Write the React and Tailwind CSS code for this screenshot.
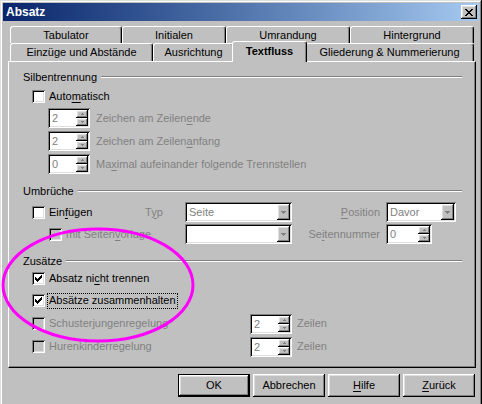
import React from "react";

// classic win2k bevels
const sunken =
  "shadow-[inset_1px_1px_0_#808080,inset_-1px_-1px_0_#fff,inset_2px_2px_0_#000,inset_-2px_-2px_0_#dfdfdf]";
const raised =
  "shadow-[inset_-1px_-1px_0_#000,inset_1px_1px_0_#fff,inset_-2px_-2px_0_#808080,inset_2px_2px_0_#dfdfdf]";

const CHECK = ["......x", ".....xx", "x...xxx", "xx.xxx.", "xxxxx..", ".xxx...", "..x...."];

const CheckMark = () => (
  <svg width="7" height="7" viewBox="0 0 7 7" shapeRendering="crispEdges">
    {CHECK.map((row, y) =>
      row.split("").map((c, x) =>
        c === "x" ? <rect key={`${x}-${y}`} x={x} y={y} width="1" height="1" fill="#000" /> : null
      )
    )}
  </svg>
);

const U = ({ children }) => <span className="underline underline-offset-[2px]">{children}</span>;

const Check = ({ checked, disabled, children, focus }) => (
  <div className="flex items-center">
    <div
      className={`flex h-[13px] w-[13px] shrink-0 items-center justify-center ${sunken} ${
        disabled ? "bg-[#c0c0c0]" : "bg-white"
      }`}
    >
      {checked && <CheckMark />}
    </div>
    <span
      className={`whitespace-nowrap leading-[13px] ${disabled ? "text-[#808080]" : "text-black"} ${
        focus ? "ml-[3px] px-[1px] pb-[1px] outline-1 outline-dotted outline-black" : "ml-[4px]"
      }`}
    >
      {children}
    </span>
  </div>
);

const Tri = ({ up, w = 5 }) => (
  <svg width={w} height={Math.ceil(w / 2)} viewBox={`0 0 ${w} ${Math.ceil(w / 2)}`} shapeRendering="crispEdges">
    <path
      d={up ? `M${w / 2} 0 L${w} ${Math.ceil(w / 2)} L0 ${Math.ceil(w / 2)} Z` : `M0 0 L${w} 0 L${w / 2} ${Math.ceil(w / 2)} Z`}
      fill="#808080"
    />
  </svg>
);

const Spin = ({ value, className }) => (
  <div className={`flex h-[20px] shrink-0 bg-white p-[2px] ${sunken} ${className}`}>
    <span className="flex-1 pl-[2px] leading-[16px] text-[#808080]">{value}</span>
    <div className="flex w-[12px] flex-col">
      <div className={`flex h-[8px] items-center justify-center bg-[#c0c0c0] ${raised}`}>
        <Tri up w={3} />
      </div>
      <div className={`flex h-[8px] items-center justify-center bg-[#c0c0c0] ${raised}`}>
        <Tri w={3} />
      </div>
    </div>
  </div>
);

const Drop = ({ value, className }) => (
  <div className={`flex h-[20px] shrink-0 bg-white p-[2px] ${sunken} ${className}`}>
    <span className="flex-1 pl-[2px] leading-[16px] text-[#808080]">{value}</span>
    <div className={`flex h-[16px] w-[13px] items-center justify-center bg-[#c0c0c0] ${raised}`}>
      <Tri w={5} />
    </div>
  </div>
);

const Header = ({ children, className }) => (
  <div className={`flex h-[14px] items-center pl-[14px] pr-[13px] ${className}`}>
    <span className="leading-[14px]">{children}</span>
    <div className="ml-[4px] h-[2px] flex-1 border-t border-b border-t-[#808080] border-b-white" />
  </div>
);

const Tab = ({ children, w, selected }) => (
  <div
    className={`flex items-center justify-center rounded-t-[3px] border-t border-l border-r border-t-white border-l-white border-r-black bg-[#c0c0c0] shadow-[inset_-1px_0_0_#808080] ${w} ${
      selected ? "relative top-[1px] z-10 -mx-[2px] h-[21px] pb-[2px] font-bold" : "h-full"
    }`}
  >
    <span className="whitespace-nowrap leading-none">{children}</span>
  </div>
);

const Btn = ({ children, def }) => (
  <div className={`h-[23px] w-[72px] ${def ? "border border-black" : ""}`}>
    <div className={`flex h-full w-full items-center justify-center bg-[#c0c0c0] ${raised}`}>
      <span className="leading-none">{children}</span>
    </div>
  </div>
);

export default function App() {
  return (
    <div className="relative h-[404px] w-[482px] overflow-hidden bg-[#c0c0c0] font-['Liberation_Sans',Arial,sans-serif] text-[11px] text-black">
      <div className="h-[410px] p-[3px] shadow-[inset_-1px_-1px_0_#000,inset_1px_1px_0_#dfdfdf,inset_-2px_-2px_0_#808080,inset_2px_2px_0_#fff]">
        {/* title bar */}
        <div className="flex h-[18px] items-center bg-gradient-to-r from-[#0a246a] to-[#a6caf0] pl-[3px] pr-[2px]">
          <span className="flex-1 text-[12px] font-bold leading-none text-white">Absatz</span>
          <div className={`flex h-[14px] w-[16px] items-center justify-center bg-[#c0c0c0] ${raised}`}>
            <svg width="8" height="7" viewBox="0 0 8 7" shapeRendering="crispEdges">
              <path d="M0 0h2v1h1v1h2v-1h1v-1h2v1h-1v1h-1v1h-1v1h1v1h1v1h1v1h-2v-1h-1v-1h-2v1h-1v1h-2v-1h1v-1h1v-1h1v-1h-1v-1h-1z" fill="#000" />
            </svg>
          </div>
        </div>

        <div className="ml-[5px] mt-[5px] w-[468px]">
          {/* tabs */}
          <div className="flex h-[17px] pl-[2px]">
            <Tab w="w-[112px]">Tabulator</Tab>
            <Tab w="w-[104px]">Initialen</Tab>
            <Tab w="w-[124px]">Umrandung</Tab>
            <Tab w="w-[124px]">Hintergrund</Tab>
          </div>
          <div className="flex h-[18px] items-end pl-[2px]">
            <Tab w="w-[143px]">Einzüge und Abstände</Tab>
            <Tab w="w-[81px]">Ausrichtung</Tab>
            <Tab w="w-[75px]" selected>
              Textfluss
            </Tab>
            <Tab w="w-[169px]">Gliederung &amp; Nummerierung</Tab>
          </div>

          {/* panel */}
          <div className="h-[307px] border-t border-l border-r border-b border-t-white border-l-white border-r-black border-b-black shadow-[inset_-1px_-1px_0_#808080]">
            <Header className="mt-[8px]">Silbentrennung</Header>
            <div className="flex h-[24px] items-center pl-[23px]">
              <Check>
                Auto<U>m</U>atisch
              </Check>
            </div>
            <div className="flex h-[20px] items-center pl-[39px]">
              <Spin value="2" className="w-[42px]" />
              <span className="ml-[6px] text-[#808080]">
                Zeichen am Zeilen<U>e</U>nde
              </span>
            </div>
            <div className="mt-[3px] flex h-[20px] items-center pl-[39px]">
              <Spin value="2" className="w-[42px]" />
              <span className="ml-[6px] text-[#808080]">
                Zeichen am Zeilen<U>a</U>nfang
              </span>
            </div>
            <div className="mt-[3px] flex h-[20px] items-center pl-[39px]">
              <Spin value="0" className="w-[42px]" />
              <span className="ml-[6px] text-[#808080]">
                Ma<U>x</U>imal aufeinander folgende Trennstellen
              </span>
            </div>

            <Header className="mt-[10px]">Umbrüche</Header>
            <div className="mt-[4px] flex h-[20px] items-center pl-[23px] pr-[19px]">
              <div className="w-[113px]">
                <Check>
                  Ein<U>f</U>ügen
                </Check>
              </div>
              <span className="w-[40px] text-[#808080]">
                T<U>y</U>p
              </span>
              <Drop value="Seite" className="w-[107px]" />
              <span className="flex-1 pr-[6px] text-right text-[#808080]">
                <U>P</U>osition
              </span>
              <Drop value="Davor" className="w-[70px]" />
            </div>
            <div className="mt-[2px] flex h-[20px] items-center pl-[40px] pr-[43px]">
              <div className="w-[96px]">
                <Check disabled>
                  mit Seiten<U>v</U>orlage
                </Check>
              </div>
              <div className="w-[40px]" />
              <Drop value="" className="w-[107px]" />
              <span className="flex-1 pr-[6px] text-right text-[#808080]">
                Se<U>i</U>tennummer
              </span>
              <Spin value="0" className="w-[46px]" />
            </div>

            <Header className="mt-[10px]">Zusätze</Header>
            <div className="flex h-[21px] items-center pl-[23px]">
              <Check checked>
                Absatz ni<U>c</U>ht trennen
              </Check>
            </div>
            <div className="flex h-[23px] items-center pl-[23px]">
              <Check checked focus>
                Absätze zusammenhalten
              </Check>
            </div>
            <div className="flex h-[23px] items-center pl-[23px]">
              <div className="w-[218px]">
                <Check disabled>Schusterjungenregelung</Check>
              </div>
              <Spin value="2" className="w-[42px]" />
              <span className="ml-[5px] text-[#808080]">Zeilen</span>
            </div>
            <div className="flex h-[23px] items-center pl-[23px]">
              <div className="w-[218px]">
                <Check disabled>Hurenkinderregelung</Check>
              </div>
              <Spin value="2" className="w-[42px]" />
              <span className="ml-[5px] text-[#808080]">Zeilen</span>
            </div>
          </div>
        </div>

        {/* buttons */}
        <div className="mt-[6px] flex justify-end gap-[3px] pr-[4px]">
          <Btn def>OK</Btn>
          <Btn>Abbrechen</Btn>
          <Btn>
            <U>H</U>ilfe
          </Btn>
          <Btn>
            <U>Z</U>urück
          </Btn>
        </div>
      </div>

      {/* annotation */}
      <svg className="pointer-events-none absolute left-0 top-0" width="482" height="404">
        <ellipse cx="98" cy="285" rx="95" ry="56" fill="none" stroke="#ff00ff" strokeWidth="3" />
      </svg>
    </div>
  );
}
